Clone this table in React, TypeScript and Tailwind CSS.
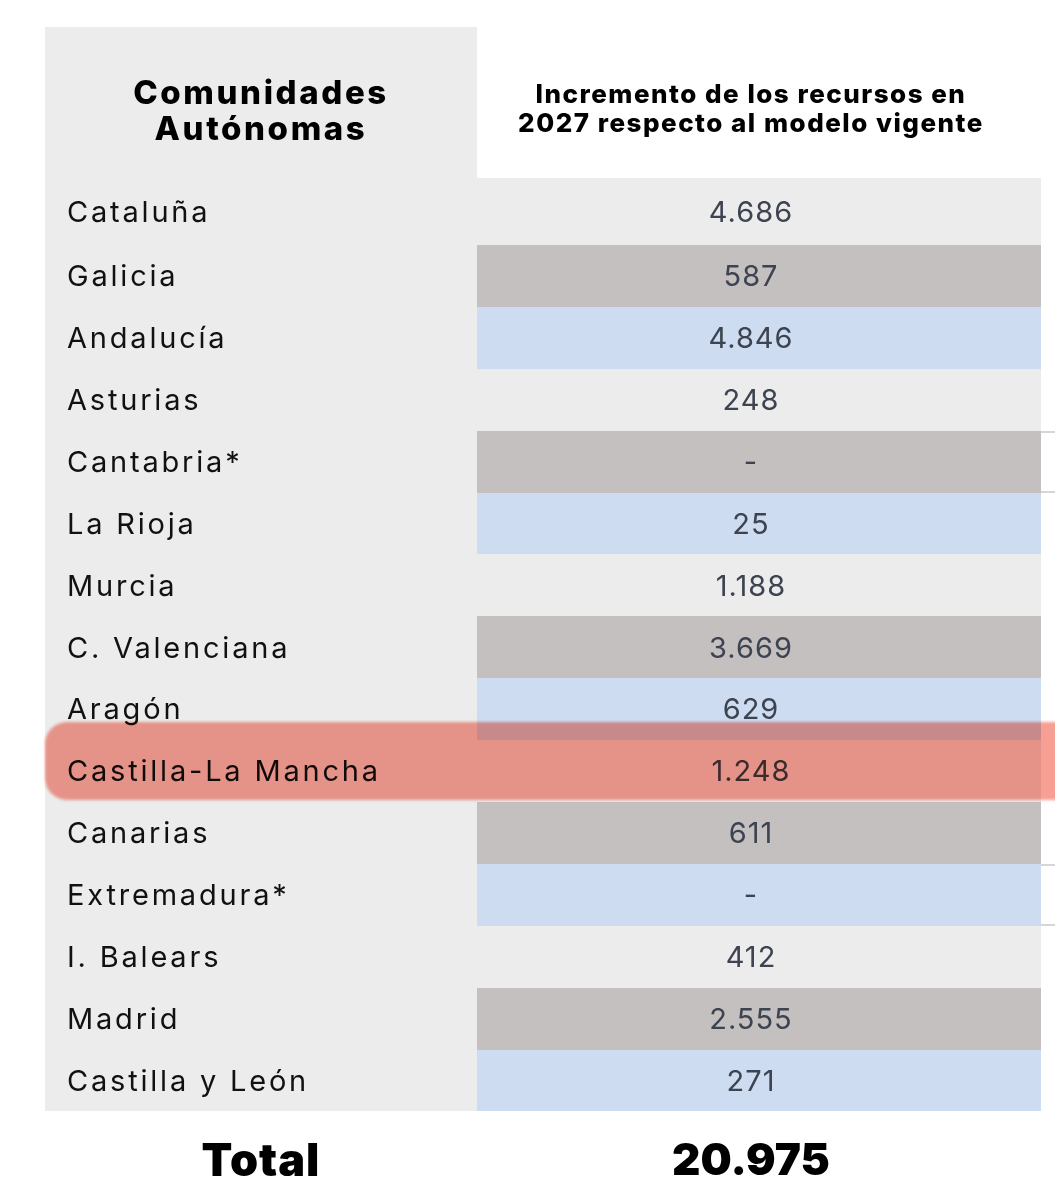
const rows: { name: string; value: string; tone: 'light' | 'dark' | 'blue'; edge?: boolean }[] = [
  { name: 'Cataluña', value: '4.686', tone: 'light' },
  { name: 'Galicia', value: '587', tone: 'dark' },
  { name: 'Andalucía', value: '4.846', tone: 'blue' },
  { name: 'Asturias', value: '248', tone: 'light' },
  { name: 'Cantabria*', value: '-', tone: 'dark', edge: true },
  { name: 'La Rioja', value: '25', tone: 'blue' },
  { name: 'Murcia', value: '1.188', tone: 'light' },
  { name: 'C. Valenciana', value: '3.669', tone: 'dark' },
  { name: 'Aragón', value: '629', tone: 'blue' },
  { name: 'Castilla-La Mancha', value: '1.248', tone: 'light' },
  { name: 'Canarias', value: '611', tone: 'dark' },
  { name: 'Extremadura*', value: '-', tone: 'blue', edge: true },
  { name: 'I. Balears', value: '412', tone: 'light' },
  { name: 'Madrid', value: '2.555', tone: 'dark' },
  { name: 'Castilla y León', value: '271', tone: 'blue' },
]

const toneBg = {
  light: 'bg-[#ececec]',
  dark: 'bg-[#c3c0bf]',
  blue: 'bg-[#cddcf0]',
}

export default function App() {
  return (
    <div
      className="relative w-[1055px] h-[1200px] bg-white pt-[27px] pl-[45px] overflow-hidden"
      style={{ fontFamily: 'Inter, "Liberation Sans", sans-serif' }}
    >
      {/* header */}
      <div className="grid grid-cols-[432px_564px_14px]">
        <div className="h-[151px] bg-[#ececec] flex items-center justify-center pt-[14px]">
          <div className="text-center text-[33px] leading-[36px] font-extrabold text-black tracking-[2.6px]">
            Comunidades
            <br />
            Autónomas
          </div>
        </div>
        <div className="h-[151px] bg-white flex items-center justify-center pr-[16px] pt-[10px]">
          <div className="text-center text-[26px] leading-[29px] font-extrabold text-black tracking-[1.5px] whitespace-nowrap">
            Incremento de los recursos en
            <br />
            2027 respecto al modelo vigente
          </div>
        </div>
        <div />
      </div>

      {/* rows */}
      <div className="flex flex-col">
        {rows.map((r, i) => (
          <div
            key={r.name}
            className={`grid grid-cols-[432px_564px_14px] ${i === 0 ? 'h-[67px]' : 'h-[61.9px]'}`}
          >
            <div className="bg-[#ececec] flex items-center pl-[22px] text-[29px] tracking-[2.8px] text-[#111]">
              {r.name}
            </div>
            <div
              className={`${toneBg[r.tone]} flex items-center justify-center pr-[16px] text-[29px] tracking-[1px] text-[#3d4350]`}
            >
              {r.value}
            </div>
            <div className={r.edge ? 'border-y-2 border-[#d6d6d6]' : ''} />
          </div>
        ))}
      </div>

      {/* total */}
      <div className="grid grid-cols-[432px_564px_14px] h-[96px]">
        <div className="flex items-center justify-center text-[45px] font-black text-black tracking-[1px]">Total</div>
        <div className="flex items-center justify-center pr-[16px] text-[44px] font-black text-black">
          20.975
        </div>
        <div />
      </div>

      {/* marker highlight */}
      <div className="absolute left-[45px] top-[722px] w-[1030px] h-[78px] rounded-l-[22px] bg-[#f89f93] mix-blend-multiply blur-[1.5px]" />
    </div>
  )
}
